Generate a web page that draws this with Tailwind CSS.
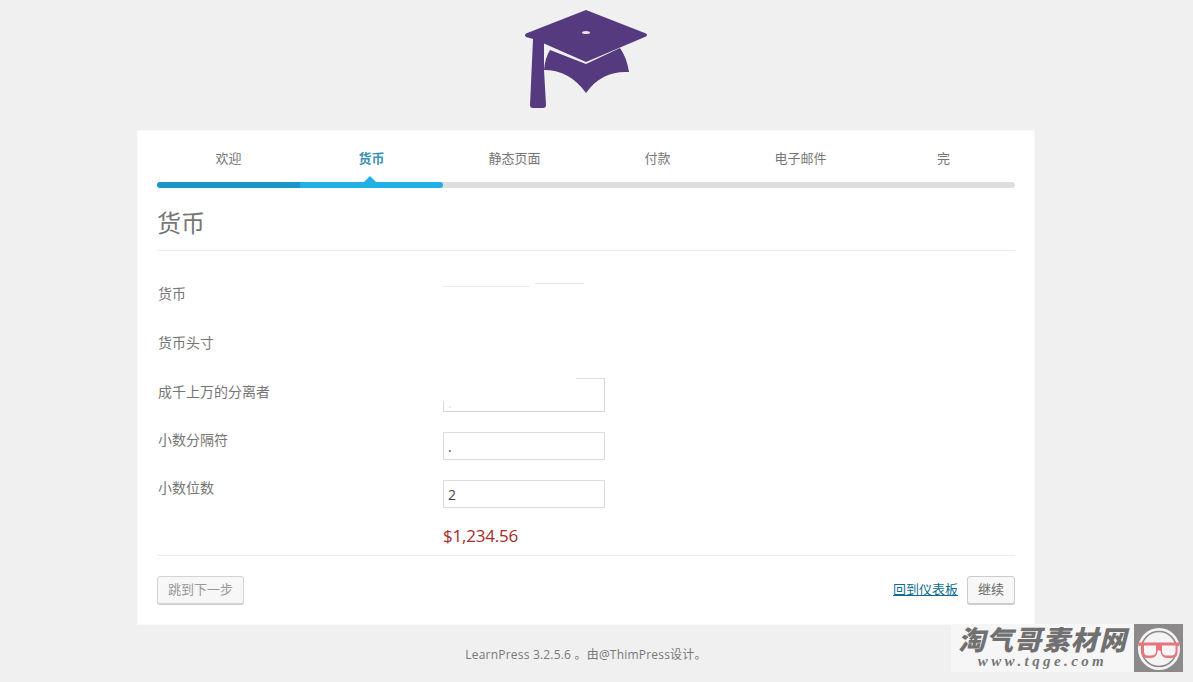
<!DOCTYPE html>
<html lang="zh">
<head>
<meta charset="utf-8">
<title>LearnPress</title>
<script src="https://cdn.jsdelivr.net/npm/@tailwindcss/browser@4"></script>
</head>
<body class="relative h-[682px] w-[1193px] overflow-hidden bg-[#f0f0f0] font-['Open_Sans','Noto_Sans_CJK_SC',sans-serif] text-[13px] text-[#757575]">
<div class="ml-[137px] w-[898px]">
  <div class="flex h-[130px] justify-center">
    <svg width="130" height="110" viewBox="521 5 130 110" class="mt-[5px]" aria-hidden="true">
      <path fill="#553a7f" d="M586 10 L646 33.5 Q648 35 646 36.5 L586 62 L544 43.5 L544 70 C560 70 575 77 586 93 C597 77 612 71 629 72 Q627 58 620 48 L586 64 L550 50 Q545 58 544 70 L546 105 Q546 108 543 108 L533 108 Q530 108 530 105 L533 39 L526 37 Q524 35 526 33.5 Z"/>
      <ellipse cx="586" cy="32.5" rx="4" ry="1.6" fill="#e6e3ec"/>
    </svg>
  </div>
  <main class="h-[495px] border border-[#f8f8f8] bg-white px-[19px] pt-[18px]">
    <ol class="grid h-[18px] grid-cols-6 text-center leading-[18px]">
      <li>欢迎</li>
      <li class="font-bold text-[#3a93b3]">货币</li>
      <li>静态页面</li>
      <li>付款</li>
      <li>电子邮件</li>
      <li>完</li>
    </ol>
    <div class="relative mt-[15px] h-[6px] rounded-full bg-[#dedede]">
      <div class="flex h-full w-1/3 overflow-hidden rounded-full">
        <div class="w-1/2 bg-[#1a97c8]"></div>
        <div class="w-1/2 bg-[#1fb0e6]"></div>
      </div>
      <div class="absolute left-[207px] top-[-6px] h-0 w-0 border-x-[6px] border-b-[6px] border-x-transparent border-b-[#1fb0e6]"></div>
    </div>
    <h1 class="flex h-[63px] items-center border-b border-[#ececec] pt-[7px] text-[24px] font-normal text-[#767676]">货币</h1>

    <div class="grid grid-cols-[286px_1fr] pt-[19px] text-[14px]">
      <div class="h-[49px] pl-[1px] pt-[15px] leading-[18px]">货币</div>
      <div class="relative">
        <div class="absolute left-0 top-[16px] h-px w-[87px] bg-[#e9e9e9]"></div>
        <div class="absolute left-[92px] top-[13px] h-px w-[49px] bg-[#e6e6e6]"></div>
      </div>
      <div class="h-[49px] pl-[1px] pt-[15px] leading-[18px]">货币头寸</div>
      <div></div>
      <div class="h-[49px] pl-[1px] pt-[15px] leading-[18px]">成千上万的分离者</div>
      <div class="relative">
        <div class="absolute left-0 top-[10px] h-[34px] w-[162px] border-r border-b border-[#d8d8d8]">
          <div class="absolute left-[133px] top-0 h-px w-[28px] bg-[#dedede]"></div>
          <div class="absolute bottom-0 left-0 h-[10px] w-px bg-[#d8d8d8]"></div>
          <span class="absolute bottom-[3px] left-[6px] text-[8px] leading-[8px] text-[#bbb]">,</span>
        </div>
      </div>
      <div class="h-[48px] pl-[1px] pt-[14px] leading-[18px]">小数分隔符</div>
      <div class="pt-[15px]">
        <input value="." readonly class="block h-[28px] w-[162px] border border-[#dcdcdc] bg-white px-[4px] text-[14px] text-[#444]">
      </div>
      <div class="h-[48px] pl-[1px] pt-[14px] leading-[18px]">小数位数</div>
      <div class="pt-[15px]">
        <input value="2" readonly class="block h-[28px] w-[162px] border border-[#dcdcdc] bg-white px-[4px] text-[14px] text-[#444]">
      </div>
      <div></div>
      <div class="h-[42px] pt-[11px] text-[17px] leading-[24px] tracking-[-0.2px] text-[#a52a2a]">$1,234.56</div>
    </div>

    <div class="flex items-start justify-between border-t border-[#ececec] pt-[20px]">
      <button class="h-[28px] w-[87px] rounded-[3px] border border-[#d4d4d4] bg-[#f7f7f7] text-[#999] shadow-[0_1px_0_#ccc]">跳到下一步</button>
      <div class="flex items-center gap-[9px]">
        <a href="#" class="text-[#0f6d8c] underline">回到仪表板</a>
        <button class="h-[28px] w-[48px] rounded-[3px] border border-[#cccccc] bg-[#f7f7f7] text-[#666] shadow-[0_1px_0_#ccc]">继续</button>
      </div>
    </div>
  </main>
  <footer class="pt-[21px] text-center text-[12px] leading-[18px] tracking-[0.2px] text-[#777]">LearnPress 3.2.5.6 。由@ThimPress设计。</footer>
</div>

<div class="absolute left-[951px] top-[624px] flex h-[48px] w-[232px]">
  <div class="flex w-[183px] flex-col items-center bg-[#f6f6f6]">
    <div class="h-[30px] font-['Noto_Sans_CJK_SC',sans-serif] text-[27px] font-black italic leading-[30px] tracking-[1.2px] text-[#707070]">淘气哥素材网</div>
    <div class="font-['Liberation_Serif',serif] text-[15px] font-bold italic leading-[14px] tracking-[3.4px] text-[#777]">www.tqge.com</div>
  </div>
  <div class="w-[49px] bg-[#8b898a]">
    <svg width="49" height="48" viewBox="0 0 49 48" aria-hidden="true">
      <circle cx="25" cy="25" r="21" fill="#f4f4f4"/>
      <circle cx="25" cy="25" r="17.5" fill="none" stroke="#8b898a" stroke-width="1.5"/>
      <path d="M4 18.5 H46 L45 22 H43.5 V28 Q43.5 34 37 34 H33 Q27 34 26.5 27 Q25 25.5 23.5 27 Q23 34 17 34 H13 Q7.5 34 7.5 28 V22 H5 Z" fill="#e8757d"/>
      <path d="M10 21.5 H22 V27 Q22 31.5 17 31.5 H13.5 Q10 31.5 10 27 Z M28 21.5 H41.5 V27 Q41.5 31.5 37 31.5 H32.5 Q28 31.5 28 27 Z" fill="#f6f6f6"/>
    </svg>
  </div>
</div>
</body>
</html>
